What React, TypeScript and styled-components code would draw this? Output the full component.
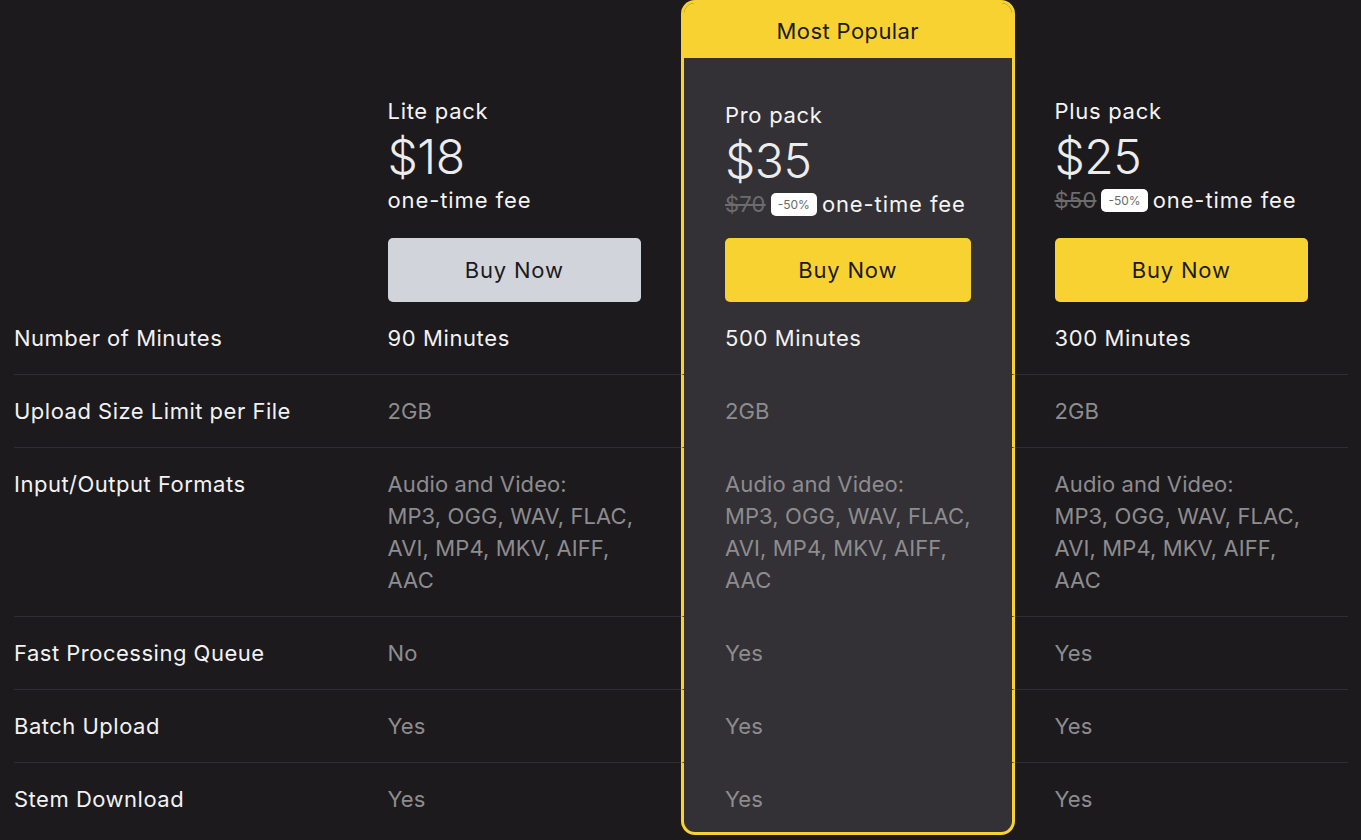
import React from "react";
import styled, { createGlobalStyle } from "styled-components";

const GlobalStyle = createGlobalStyle`
  html, body { margin: 0; padding: 0; background: #1c1a1d; }
  body { font-family: Inter, "Noto Sans", sans-serif; color: #f2f2f2; }
  * { box-sizing: border-box; }
`;

const YELLOW = "#f8d231";
const CARD = "#333135";
const LINE = "#302e32";

const Table = styled.div`
  display: grid;
  grid-template-columns: repeat(4, 1fr);
  padding: 0 13px 0 14px;
  width: 1361px;
  font-size: 22px;
  letter-spacing: 0.7px;
`;

const Spacer = styled.div``;

const PlanHeader = styled.div<{ $featured?: boolean }>`
  display: flex;
  flex-direction: column;
  justify-content: flex-end;
  padding: 0 40px;
  ${(p) =>
    p.$featured &&
    `
    background: ${CARD};
    border: 3px solid ${YELLOW};
    border-bottom: none;
    border-radius: 14px 14px 0 0;
    padding: 0 41px 0 41px;
    overflow: hidden;
  `}
`;

const Badge = styled.div`
  margin: 0 -41px 43px -41px;
  height: 55px;
  background: ${YELLOW};
  color: #1c1a1d;
  display: flex;
  align-items: center;
  justify-content: center;
  font-size: 22px;
  letter-spacing: 0.4px;
`;

const PlanName = styled.div`
  font-size: 22px;
  line-height: 28px;
  color: #f4f4f4;
`;

const Price = styled.div`
  margin-top: 8px;
  font-size: 48px;
  line-height: 48px;
  color: #ececec;
  font-weight: 300;
  letter-spacing: -0.5px;
`;

const FeeRow = styled.div<{ $featured?: boolean }>`
  margin-top: 5px;
  margin-bottom: ${(p) => (p.$featured ? 20 : 24)}px;
  display: flex;
  align-items: center;
  gap: 5px;
  height: 28px;
  font-size: 22px;
  color: #f4f4f4;
  letter-spacing: 0.9px;
`;

const OldPrice = styled.span`
  color: #6c6b6e;
  text-decoration: line-through;
  letter-spacing: 0.2px;
`;

const Pill = styled.span`
  background: #ffffff;
  color: #6a6a6a;
  font-size: 12px;
  letter-spacing: 0;
  border-radius: 5px;
  height: 23px;
  padding: 0 7px;
  display: inline-flex;
  align-items: center;
`;

const BuyButton = styled.button<{ $primary?: boolean }>`
  height: 64px;
  width: 100%;
  border: none;
  border-radius: 5px;
  background: ${(p) => (p.$primary ? YELLOW : "#d1d5db")};
  color: #1c1a1d;
  font-family: inherit;
  font-size: 22px;
  letter-spacing: 0.8px;
  cursor: pointer;
`;

const LabelCell = styled.div<{ $last?: boolean }>`
  padding: 20px 0;
  line-height: 32px;
  font-size: 22px;
  letter-spacing: 0.5px;
  color: #f2f2f2;
  border-bottom: ${(p) => (p.$last ? "none" : `1px solid ${LINE}`)};
`;

const ValueCell = styled.div<{ $featured?: boolean; $last?: boolean; $strong?: boolean }>`
  padding: 20px 40px;
  line-height: 32px;
  font-size: 22px;
  letter-spacing: ${(p) => (p.$strong ? "0.6px" : "0.1px")};
  color: ${(p) => (p.$strong ? "#f2f2f2" : "#8d8c8f")};
  border-bottom: ${(p) => (p.$last ? "none" : `1px solid ${LINE}`)};
  ${(p) =>
    p.$featured &&
    `
    background: ${CARD};
    border-left: 3px solid ${YELLOW};
    border-right: 3px solid ${YELLOW};
    border-bottom: ${p.$last ? `3px solid ${YELLOW}` : `1px solid ${CARD}`};
    border-radius: ${p.$last ? "0 0 14px 14px" : "0"};
    padding: 20px 37px ${p.$last ? 17 : 20}px 41px;
  `}
`;

type Plan = {
  name: string;
  price: string;
  old?: string;
  featured?: boolean;
  primary?: boolean;
  values: string[];
};

const plans: Plan[] = [
  {
    name: "Lite pack",
    price: "$18",
    values: ["90 Minutes", "2GB", "FORMATS", "No", "Yes", "Yes"],
  },
  {
    name: "Pro pack",
    price: "$35",
    old: "$70",
    featured: true,
    primary: true,
    values: ["500 Minutes", "2GB", "FORMATS", "Yes", "Yes", "Yes"],
  },
  {
    name: "Plus pack",
    price: "$25",
    old: "$50",
    primary: true,
    values: ["300 Minutes", "2GB", "FORMATS", "Yes", "Yes", "Yes"],
  },
];

const labels = [
  "Number of Minutes",
  "Upload Size Limit per File",
  "Input/Output Formats",
  "Fast Processing Queue",
  "Batch Upload",
  "Stem Download",
];

const Formats = () => (
  <>
    Audio and Video:
    <br />
    MP3, OGG, WAV, FLAC,
    <br />
    AVI, MP4, MKV, AIFF,
    <br />
    AAC
  </>
);

export default function App() {
  return (
    <>
      <GlobalStyle />
      <Table>
        <Spacer />
        {plans.map((p) => (
          <PlanHeader key={p.name} $featured={p.featured}>
            {p.featured && <Badge>Most Popular</Badge>}
            <PlanName>{p.name}</PlanName>
            <Price>{p.price}</Price>
            <FeeRow $featured={p.featured}>
              {p.old && (
                <>
                  <OldPrice>{p.old}</OldPrice>
                  <Pill>-50%</Pill>
                </>
              )}
              <span>one-time fee</span>
            </FeeRow>
            <BuyButton $primary={p.primary}>Buy Now</BuyButton>
          </PlanHeader>
        ))}
        {labels.map((label, i) => {
          const last = i === labels.length - 1;
          return (
            <React.Fragment key={label}>
              <LabelCell $last={last}>{label}</LabelCell>
              {plans.map((p) => (
                <ValueCell
                  key={p.name}
                  $featured={p.featured}
                  $last={last}
                  $strong={i === 0}
                >
                  {p.values[i] === "FORMATS" ? <Formats /> : p.values[i]}
                </ValueCell>
              ))}
            </React.Fragment>
          );
        })}
      </Table>
    </>
  );
}
